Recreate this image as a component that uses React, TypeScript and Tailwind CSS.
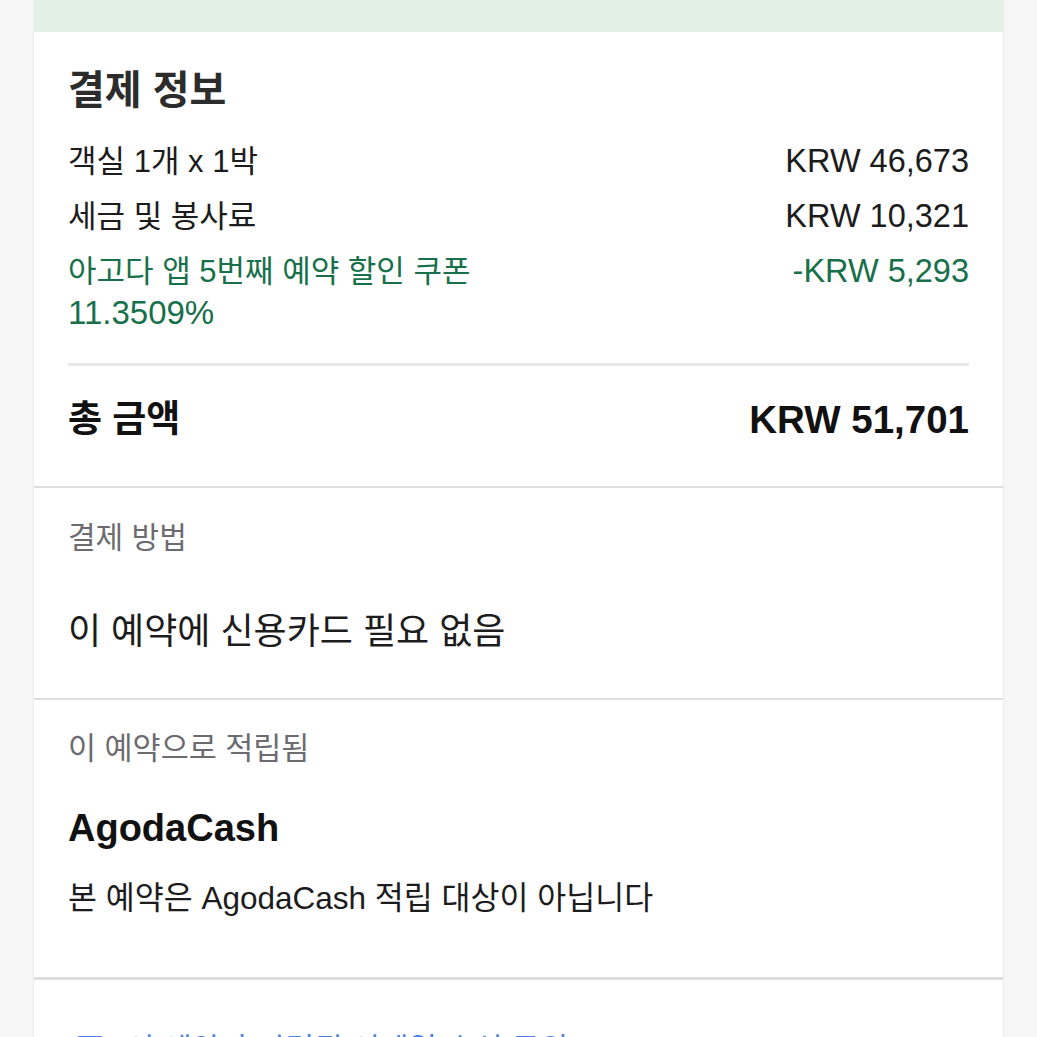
const font = { fontFamily: '"Liberation Sans", "Noto Sans CJK KR", sans-serif' };

interface Line {
  label: string;
  amount: string;
  discount?: boolean;
}

const lines: Line[] = [
  { label: "객실 1개 x 1박", amount: "KRW 46,673" },
  { label: "세금 및 봉사료", amount: "KRW 10,321" },
  { label: "아고다 앱 5번째 예약 할인 쿠폰", amount: "-KRW 5,293", discount: true },
];

export default function App() {
  return (
    <div className="min-h-[1037px] w-full bg-[#f6f6f6]" style={font}>
      <div className="mx-[33px] bg-white border-x border-[#ececec]">
        <div className="h-8 bg-[#e2f0e5]" />

        {/* 결제 정보 */}
        <section className="px-[34px] pt-[34px] pb-[42px]">
          <h2 className="text-[40px] leading-[48px] font-bold text-[#2c2c2c]">결제 정보</h2>
          <div className="mt-[27px] flex flex-col gap-[14px]">
            {lines.map((line, i) => (
              <div
                key={i}
                className={`flex justify-between items-start leading-[41px] ${
                  line.discount ? "text-[#17704a]" : "text-[#1c1c1c]"
                }`}
              >
                <div className="text-[31px]">
                  <div>{line.label}</div>
                  {line.discount && <div className="text-[33px]">11.3509%</div>}
                </div>
                <span className="text-right text-[32.5px]">{line.amount}</span>
              </div>
            ))}
          </div>
          <div className="mt-[30px] h-[3px] bg-[#e8e8e8]" />
          <div className="mt-[30px] flex justify-between items-center leading-[48px] font-bold text-[#111]">
            <span className="text-[37px]">총 금액</span>
            <span className="text-[38.5px]">KRW 51,701</span>
          </div>
        </section>

        <div className="h-[2px] bg-[#dedede]" />

        {/* 결제 방법 */}
        <section className="px-[34px] pt-[30px] pb-[44px]">
          <p className="text-[30px] leading-[40px] text-[#6b6b70]">결제 방법</p>
          <p className="mt-[52px] text-[36px] leading-[44px] text-[#1c1c1c]">이 예약에 신용카드 필요 없음</p>
        </section>

        <div className="h-[2px] bg-[#dedede]" />

        {/* 적립 */}
        <section className="px-[34px] pt-[28px] pb-[59px]">
          <p className="text-[30.5px] leading-[40px] text-[#6b6b70]">이 예약으로 적립됨</p>
          <p className="mt-[38px] text-[38px] leading-[44px] font-bold text-[#111]">AgodaCash</p>
          <p className="mt-[28px] text-[31.5px] leading-[40px] text-[#1c1c1c]">본 예약은 AgodaCash 적립 대상이 아닙니다</p>
        </section>

        <div className="h-[3px] bg-[#dedede]" />

        <section className="px-[42px] pt-[50px] pb-10">
          <div className="flex items-center gap-[22px]">
            <div className="w-[28px] h-[28px] rounded-[4px] bg-[#4d82e6] shrink-0" />
            <span className="text-[31px] leading-[40px] text-[#4d82e6]">이 예약과 관련된 이메일 수신 동의</span>
          </div>
        </section>
      </div>
    </div>
  );
}
